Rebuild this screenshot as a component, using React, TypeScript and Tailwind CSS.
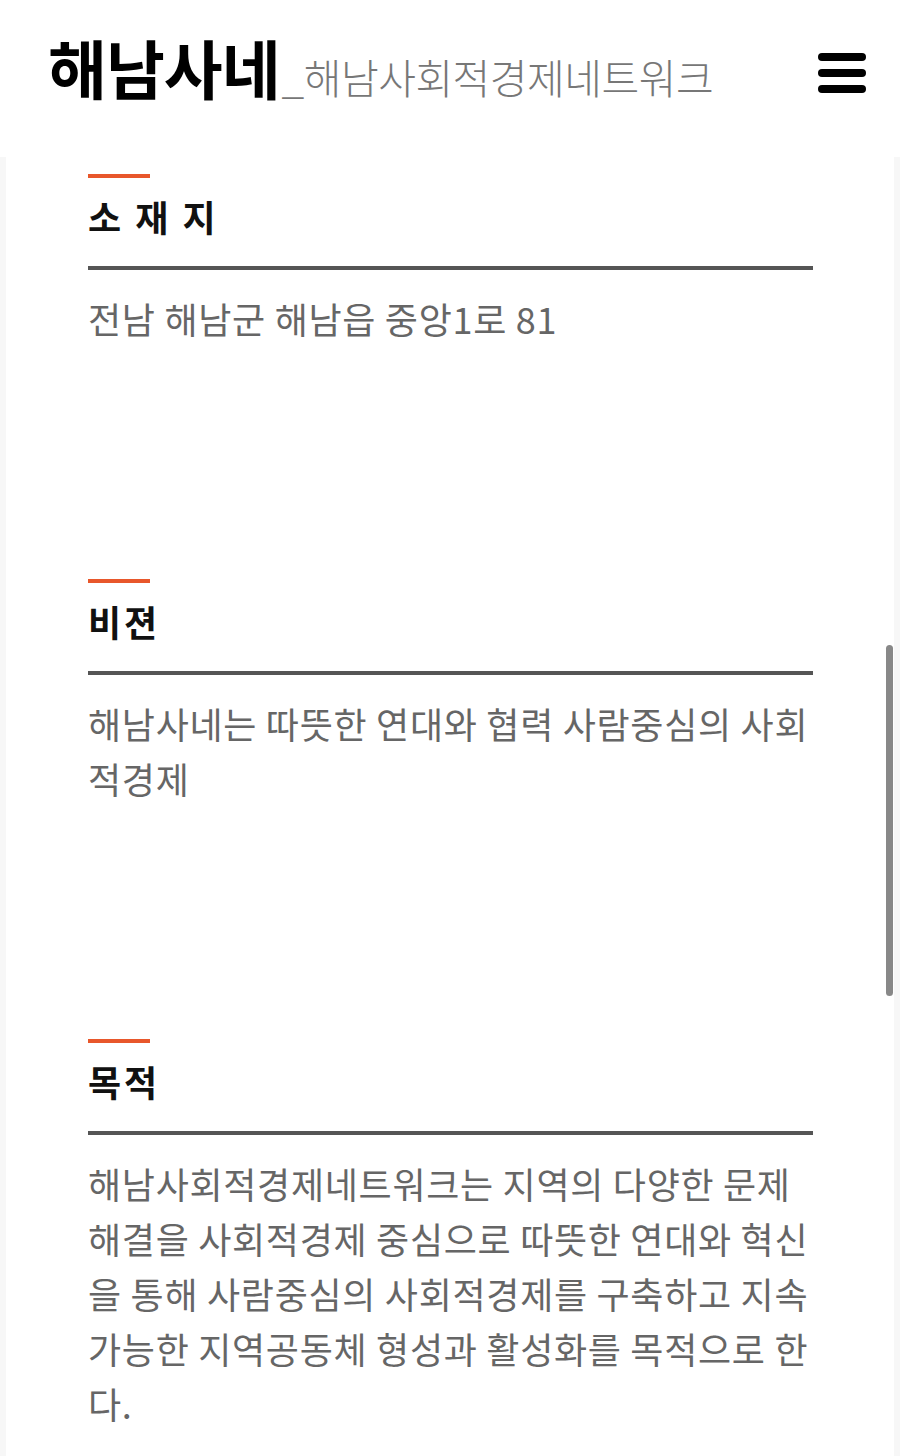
const sections = [
  { title: '소 재 지', lines: ['전남 해남군 해남읍 중앙1로 81'] },
  { title: '비젼', lines: ['해남사네는 따뜻한 연대와 협력 사람중심의 사회', '적경제'] },
  {
    title: '목적',
    lines: [
      '해남사회적경제네트워크는 지역의 다양한 문제',
      '해결을 사회적경제 중심으로 따뜻한 연대와 혁신',
      '을 통해 사람중심의 사회적경제를 구축하고 지속',
      '가능한 지역공동체 형성과 활성화를 목적으로 한',
      '다.',
    ],
  },
]

export default function App() {
  return (
    <div className="relative h-[1456px] overflow-hidden bg-white font-['Noto_Sans_CJK_KR','Noto_Sans',sans-serif]">
      <header className="flex h-[157px] items-start justify-between bg-white pl-[48px] pr-[34px]">
        <div className="mt-[26px] flex items-baseline">
          <span className="text-[64px] font-bold leading-[80px] tracking-[-1px] text-black">해남사네</span>
          <span className="ml-[2px] text-[41px] font-extralight leading-[50px] tracking-[-0.5px] text-[#777]">
            _해남사회적경제네트워크
          </span>
        </div>
        <button type="button" aria-label="menu" className="mt-[53px] flex flex-col gap-[8px]">
          <span className="block h-[8px] w-[48px] rounded-full bg-black" />
          <span className="block h-[8px] w-[48px] rounded-full bg-black" />
          <span className="block h-[8px] w-[48px] rounded-full bg-black" />
        </button>
      </header>

      <main className="bg-[#f7f7f7] px-[6px]">
        <div className="bg-white pl-[82px] pr-[81px] pt-[17px] pb-[200px]">
          {sections.map((section) => (
            <section key={section.title} className="mb-[233px]">
              <div className="h-[4px] w-[62px] bg-[#e8572b]" />
              <h2 className="mt-[18px] text-[36px] font-bold leading-[40px] tracking-[3px] text-[#111]">
                {section.title}
              </h2>
              <div className="mt-[30px] h-[4px] bg-[#555]" />
              <p className="mt-[21px] text-[36px] leading-[55px] tracking-[0.7px] text-[#666]">
                {section.lines.map((line, i) => (
                  <span key={i} className="block whitespace-nowrap">
                    {line}
                  </span>
                ))}
              </p>
            </section>
          ))}
        </div>
      </main>

      <div className="absolute right-[7px] top-[645px] h-[351px] w-[7px] rounded-full bg-[#888]" />
    </div>
  )
}
